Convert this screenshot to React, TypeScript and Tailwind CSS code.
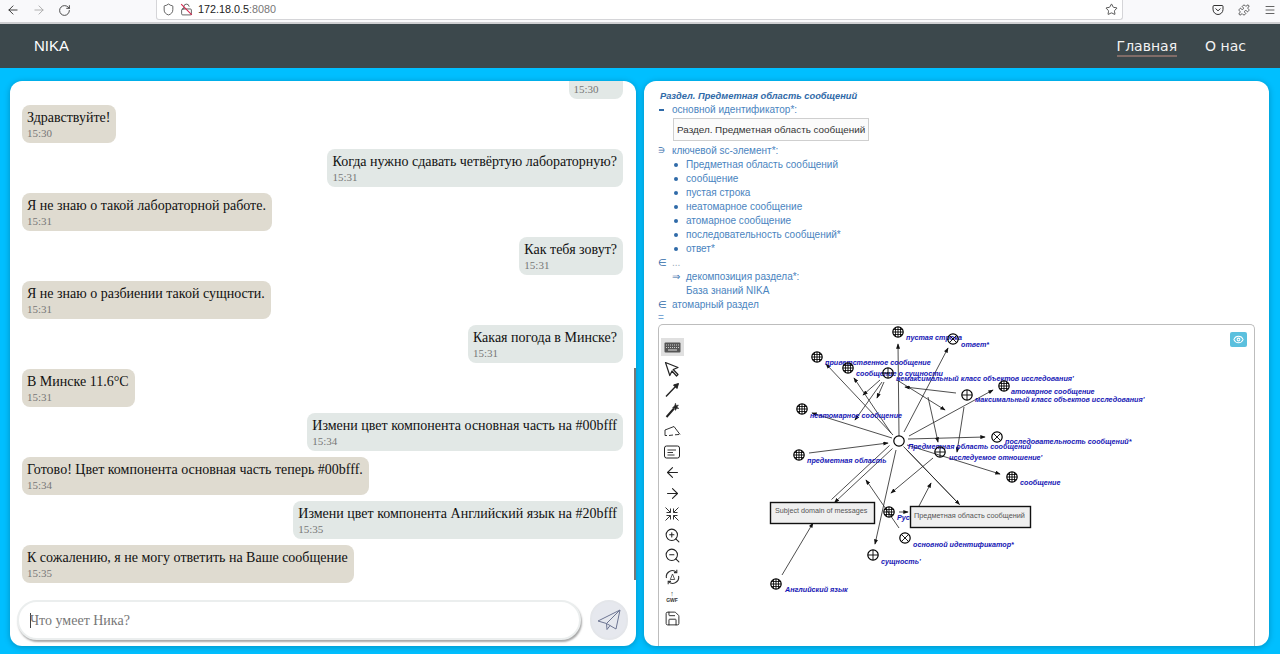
import {
  ArrowLeft,
  ArrowRight,
  Eye,
  Menu,
  Puzzle,
  RotateCw,
  Save,
  Shield,
  Star,
  ZoomIn,
  ZoomOut,
  LockOpen,
} from "lucide-react";

type Message = { text: string; time: string; mine?: boolean };

const messages: Message[] = [
  { text: "Привет", time: "15:30", mine: true },
  { text: "Здравствуйте!", time: "15:30" },
  { text: "Когда нужно сдавать четвёртую лабораторную?", time: "15:31", mine: true },
  { text: "Я не знаю о такой лабораторной работе.", time: "15:31" },
  { text: "Как тебя зовут?", time: "15:31", mine: true },
  { text: "Я не знаю о разбиении такой сущности.", time: "15:31" },
  { text: "Какая погода в Минске?", time: "15:31", mine: true },
  { text: "В Минске 11.6°C", time: "15:31" },
  { text: "Измени цвет компонента основная часть на #00bfff", time: "15:34", mine: true },
  { text: "Готово! Цвет компонента основная часть теперь #00bfff.", time: "15:34" },
  { text: "Измени цвет компонента Английский язык на #20bfff", time: "15:35", mine: true },
  { text: "К сожалению, я не могу ответить на Ваше сообщение", time: "15:35" },
];

const keyElements = [
  "Предметная область сообщений",
  "сообщение",
  "пустая строка",
  "неатомарное сообщение",
  "атомарное сообщение",
  "последовательность сообщений*",
  "ответ*",
];

type NodeKind = "globe" | "plus" | "cross" | "plain";

const nodes: { x: number; y: number; kind: NodeKind }[] = [
  { x: 898, y: 332, kind: "globe" },
  { x: 953, y: 339, kind: "cross" },
  { x: 817, y: 357, kind: "globe" },
  { x: 848, y: 368, kind: "globe" },
  { x: 888, y: 373, kind: "plus" },
  { x: 1004, y: 386, kind: "globe" },
  { x: 967, y: 395, kind: "plus" },
  { x: 802, y: 409, kind: "globe" },
  { x: 899, y: 441, kind: "plain" },
  { x: 997, y: 437, kind: "cross" },
  { x: 799, y: 455, kind: "globe" },
  { x: 940, y: 452, kind: "plus" },
  { x: 1012, y: 477, kind: "globe" },
  { x: 889, y: 512, kind: "globe" },
  { x: 905, y: 538, kind: "cross" },
  { x: 873, y: 555, kind: "plus" },
  { x: 776, y: 584, kind: "globe" },
];

const labels: { x: number; y: number; text: string }[] = [
  { x: 906, y: 340, text: "пустая строка" },
  { x: 961, y: 347, text: "ответ*" },
  { x: 825, y: 365, text: "приветственное сообщение" },
  { x: 856, y: 376, text: "сообщение о сущности" },
  { x: 896, y: 381, text: "немаксимальный класс объектов исследования'" },
  { x: 1011, y: 394, text: "атомарное сообщение" },
  { x: 975, y: 402, text: "максимальный класс объектов исследования'" },
  { x: 810, y: 418, text: "неатомарное сообщение" },
  { x: 1005, y: 444, text: "последовательность сообщений*" },
  { x: 908, y: 449, text: "Предметная область сообщений" },
  { x: 949, y: 460, text: "исследуемое отношение'" },
  { x: 807, y: 463, text: "предметная область" },
  { x: 1020, y: 485, text: "сообщение" },
  { x: 897, y: 520, text: "Русский язык" },
  { x: 913, y: 547, text: "основной идентификатор*" },
  { x: 881, y: 564, text: "сущность'" },
  { x: 785, y: 592, text: "Английский язык" },
];

const edges = [
  [899, 436, 898, 344],
  [904, 432, 948, 348],
  [893, 435, 826, 364],
  [891, 433, 854, 378],
  [909, 436, 993, 390],
  [892, 438, 812, 413],
  [809, 453, 888, 443],
  [908, 439, 985, 437],
  [907, 445, 1000, 474],
  [896, 450, 875, 544],
  [880, 380, 863, 395],
  [884, 382, 877, 398],
  [882, 382, 855, 420],
  [897, 380, 945, 410],
  [956, 393, 905, 387],
  [964, 407, 957, 452],
  [928, 397, 938, 442],
  [933, 458, 891, 493],
  [899, 528, 866, 480],
  [919, 506, 931, 483],
  [782, 575, 813, 523],
  [899, 512, 908, 512],
];

function GraphNode({ x, y, kind }: { x: number; y: number; kind: NodeKind }) {
  return (
    <g stroke="#000" fill="none">
      <circle cx={x} cy={y} r={5.2} strokeWidth={1.2} fill={kind === "plain" ? "#fff" : "none"} />
      {(kind === "globe" || kind === "plus") && (
        <path d={`M${x - 5} ${y}H${x + 5}M${x} ${y - 5}V${y + 5}`} strokeWidth={0.9} />
      )}
      {kind === "globe" && (
        <path
          d={`M${x - 4.5} ${y - 2.5}H${x + 4.5}M${x - 4.5} ${y + 2.5}H${x + 4.5}M${x - 2.5} ${y - 4.5}V${y + 4.5}M${x + 2.5} ${y - 4.5}V${y + 4.5}`}
          strokeWidth={0.8}
        />
      )}
      {kind === "cross" && (
        <path
          d={`M${x - 3.6} ${y - 3.6}L${x + 3.6} ${y + 3.6}M${x + 3.6} ${y - 3.6}L${x - 3.6} ${y + 3.6}`}
          strokeWidth={0.9}
        />
      )}
    </g>
  );
}

function DoubleEdge({ x1, y1, x2, y2 }: { x1: number; y1: number; x2: number; y2: number }) {
  return (
    <g stroke="#222" strokeWidth={0.8}>
      <line x1={x1 - 1.5} y1={y1 - 1.5} x2={x2 - 1.5} y2={y2 - 1.5} />
      <line x1={x1 + 1.5} y1={y1 + 1.5} x2={x2 + 1.5} y2={y2 + 1.5} markerEnd="url(#tip)" />
    </g>
  );
}

function Graph() {
  return (
    <svg className="h-full min-w-0 flex-1" fontFamily="'Liberation Sans', sans-serif">
      <defs>
        <marker id="tip" viewBox="0 0 8 6" refX="7" refY="3" markerWidth="7" markerHeight="5" orient="auto">
          <path d="M0 0L8 3L0 6z" fill="#111" />
        </marker>
      </defs>
      <g transform="translate(-689,-325)">
        {edges.map(([x1, y1, x2, y2], i) => (
          <line key={i} x1={x1} y1={y1} x2={x2} y2={y2} stroke="#222" strokeWidth={0.8} markerEnd="url(#tip)" />
        ))}
        <DoubleEdge x1={891} y1={447} x2={833} y2={501} />
        <DoubleEdge x1={905} y1={448} x2={958} y2={503} />
        {labels.map((l) => (
          <text key={l.text} x={l.x} y={l.y} fontSize={7.2} fontWeight={700} fontStyle="italic" fill="#1414b4">
            {l.text}
          </text>
        ))}
        {nodes.map((n, i) => (
          <GraphNode key={i} {...n} />
        ))}
        <rect x={770.5} y={502.5} width={104} height={21} fill="#efefef" stroke="#111" strokeWidth={1.4} />
        <text x={775} y={513} fontSize={7.2} fill="#555">
          Subject domain of messages
        </text>
        <rect x={910.5} y={506.5} width={120} height={21} fill="#efefef" stroke="#111" strokeWidth={1.4} />
        <text x={914} y={518} fontSize={7.3} fill="#555">
          Предметная область сообщений
        </text>
      </g>
    </svg>
  );
}

function Toolbar() {
  const cls = "h-[17px] w-[17px] text-[#222] my-[-0.5px]";
  return (
    <div className="flex w-[30px] shrink-0 flex-col items-center gap-[4.8px] pr-[4px] pt-[13px]">
      <div className="flex h-[18px] w-[23px] items-center justify-center bg-[#e0e0e0]">
        <svg width="17" height="11" viewBox="0 0 17 11">
          <rect x="0.5" y="0.5" width="16" height="10" rx="1" fill="#555" />
          <path d="M2 3H15M2 5.5H15" stroke="#ddd" strokeWidth="0.9" strokeDasharray="1 1" />
          <path d="M4 8H13" stroke="#ddd" strokeWidth="1" />
        </svg>
      </div>
      <svg width="16" height="16" viewBox="0 0 16 16" fill="none" stroke="#222" strokeWidth="1.2" strokeLinejoin="round">
        <path d="M1.5 1.5L14 6.5L9.2 8.5L14 13.5L12.5 15L8 10L5.8 14.5z" />
      </svg>
      <svg width="16" height="16" viewBox="0 0 16 16" fill="none" stroke="#222">
        <path d="M2 14.5L12.5 3.5" strokeWidth="1.4" />
        <path d="M9.5 3L14.5 1.5L13 6.5z" fill="#222" />
      </svg>
      <svg width="16" height="16" viewBox="0 0 16 16" fill="none" stroke="#222">
        <path d="M2.5 15L10 6.5" strokeWidth="2" />
        <path d="M11.5 1L12 3.5L14.5 3L13 5L15 6.5L12.5 6.5L11.5 8.5L10.5 6.2L8.5 5.5L10.5 4z" fill="#222" strokeWidth="0.4" />
      </svg>
      <svg width="17" height="16" viewBox="0 0 17 16" fill="none" stroke="#333" strokeWidth="1">
        <path d="M1 7L10 3.5L16 11.5" />
        <path d="M1 7V12.5H3M5 12.5L9 12M11 11.8L15 11.5" />
      </svg>
      <svg width="16" height="16" viewBox="0 0 16 16" fill="none" stroke="#222">
        <rect x="0.5" y="2" width="15" height="12" rx="2" />
        <path d="M3.5 6H12M3.5 8.5H9M3.5 11H10.5" strokeWidth="0.9" />
      </svg>
      <ArrowLeft className={cls} strokeWidth={1.5} />
      <ArrowRight className={cls} strokeWidth={1.5} />
      <svg width="16" height="16" viewBox="0 0 16 16" fill="none" stroke="#333" strokeWidth="1">
        <path d="M1.5 1.5L6.5 6.5M6.5 2.5V6.5H2.5" />
        <path d="M14.5 1.5L9.5 6.5M9.5 2.5V6.5H13.5" />
        <path d="M1.5 14.5L6.5 9.5M6.5 13.5V9.5H2.5" />
        <path d="M14.5 14.5L9.5 9.5M9.5 13.5V9.5H13.5" />
      </svg>
      <ZoomIn className={cls} strokeWidth={1.5} />
      <ZoomOut className={cls} strokeWidth={1.5} />
      <svg width="17" height="16" viewBox="0 0 17 16" fill="none" stroke="#333" strokeWidth="1.1">
        <path d="M2.5 9A6 6 0 0 1 12.5 3.3M14.5 7A6 6 0 0 1 4.5 12.7" />
        <path d="M12.8 0.8V3.6H10M4.2 15.2V12.4H7" />
        <path d="M8.5 5L6.3 10.5H10.7z" strokeWidth="0.8" />
      </svg>
      <div className="flex h-[16px] flex-col items-center font-['Liberation_Sans',sans-serif] text-[5px] font-bold leading-[5px] text-[#333]">
        <span className="text-[7px] font-normal leading-[8px]">↑</span>
        <span>GWF</span>
      </div>
      <Save className={cls} strokeWidth={1.3} />
    </div>
  );
}

function KnowledgePanel() {
  return (
    <div className="flex h-full w-[625px] flex-col overflow-hidden rounded-xl bg-white px-[14px] pt-[9px] font-['Liberation_Sans',sans-serif] text-[10px] leading-[14px] text-[#4a84c0] shadow-[0_1px_6px_rgba(0,0,0,0.25)]">
      <div className="pl-[2px] text-[9.3px] font-bold italic leading-[13px] text-[#2f6aa8]">
        Раздел. Предметная область сообщений
      </div>
      <div className="flex h-[13px] items-center gap-[8px] pl-[1px]">
        <span className="h-[2px] w-[5px] bg-[#2f6aa8]" />
        <span>основной идентификатор*:</span>
      </div>
      <div className="ml-[15px] mb-[3px] mt-[2px] w-fit border border-[#cfcfcf] bg-[#fbfbfb] px-[3px] py-[3.5px] text-[9.9px] text-[#333]">
        Раздел. Предметная область сообщений
      </div>
      <div className="flex h-[14px] items-center gap-[8px]">
        <span className="w-[6px] text-[8px] text-[#2f6aa8]">∋</span>
        <span>ключевой sc-элемент*:</span>
      </div>
      <ul className="pl-[16px]">
        {keyElements.map((k) => (
          <li key={k} className="flex h-[14px] items-center gap-[8px]">
            <span className="h-[4px] w-[4px] rounded-full bg-[#2f6aa8]" />
            {k}
          </li>
        ))}
      </ul>
      <div className="flex h-[14px] items-center gap-[9px]">
        <span className="w-[5px] text-[#2f6aa8]">∈</span>
        <span className="text-[#9ab]">...</span>
      </div>
      <div className="flex h-[14px] items-center gap-[6px] pl-[14px]">
        <span className="w-[8px] text-[#2f6aa8]">⇒</span>
        <span>декомпозиция раздела*:</span>
      </div>
      <div className="h-[14px] pl-[28px]">База знаний NIKA</div>
      <div className="flex h-[14px] items-center gap-[9px]">
        <span className="w-[5px] text-[#2f6aa8]">∈</span>
        <span>атомарный раздел</span>
      </div>
      <div className="h-[12px] leading-[12px] text-[#7aa6d4]">=</div>
      <div className="relative flex min-h-0 flex-1 rounded-t-[5px] border border-b-0 border-[#bdbdbd]">
        <Toolbar />
        <Graph />
        <button className="absolute right-[7px] top-[7px] flex h-[15px] w-[17px] items-center justify-center rounded-[2px] bg-[#5bc0de]">
          <Eye className="h-[11px] w-[11px] text-white" strokeWidth={2.2} />
        </button>
      </div>
    </div>
  );
}

function ChatPanel() {
  return (
    <div className="relative flex h-full w-[626px] flex-col overflow-hidden rounded-xl bg-white font-['Liberation_Serif',serif] shadow-[0_1px_6px_rgba(0,0,0,0.25)]">
      <div className="flex min-h-0 flex-1 flex-col justify-end gap-[6px] overflow-hidden pl-[12px] pr-[13px]">
        {messages.map((m) => (
          <div
            key={m.text}
            className={`flex h-[38px] w-fit shrink-0 flex-col rounded-lg pl-[5px] pr-[6px] pt-[5px] ${
              m.mine ? "self-end bg-[#e2e8e6]" : "bg-[#dfdbd0]"
            }`}
          >
            <span className="text-[14px] leading-[16px] text-[#111]">{m.text}</span>
            <span className="text-[11px] leading-[14px] text-[#777]">{m.time}</span>
          </div>
        ))}
      </div>
      <div className="absolute right-0 top-[287px] h-[212px] w-[2px] bg-[#777]" />
      <div className="flex h-[63px] shrink-0 items-start gap-[9px] pl-[7px] pt-[17px]">
        <div className="flex h-[40px] w-[564px] items-center rounded-[20px] border-2 border-[#ebeeee] bg-white pl-[11px] text-[14px] text-[#777] shadow-[1px_2px_2px_rgba(0,0,0,0.35)]">
          <span className="mr-[-1px] h-[15px] w-[1px] bg-[#444]" />
          Что умеет Ника?
        </div>
        <button className="flex h-[40px] w-[38px] items-center justify-center rounded-full border-2 border-[#e4e6ea] bg-[#e6e8ee]">
          <svg width="24" height="24" viewBox="0 0 24 24" fill="none" stroke="#6d7592" strokeWidth="1" strokeLinejoin="round">
            <path d="M23 2L1 13L9.5 15.5L23 2L19 21L9.5 15.5L10 21.5L13 17.6" />
          </svg>
        </button>
      </div>
    </div>
  );
}

function BrowserBar() {
  return (
    <div className="flex h-[24px] shrink-0 items-start border-b-2 border-[#cfcfd2] bg-[#f9f9fb] font-['Liberation_Sans',sans-serif]">
      <div className="flex h-[20px] w-[156px] items-center gap-[12px] pl-[6px] text-[#333]">
        <ArrowLeft className="h-[14px] w-[14px]" strokeWidth={1.6} />
        <ArrowRight className="h-[14px] w-[14px] text-[#aaa]" strokeWidth={1.6} />
        <RotateCw className="h-[13px] w-[13px]" strokeWidth={1.6} />
      </div>
      <div className="flex h-[20px] w-[967px] items-center gap-[5px] rounded-b-[3px] border border-t-0 border-[#d5d5d8] bg-white pl-[5px] pr-[4px] text-[10.8px]">
        <Shield className="h-[13px] w-[13px] text-[#444]" strokeWidth={1.5} />
        <span className="relative">
          <LockOpen className="h-[13px] w-[13px] text-[#444]" strokeWidth={1.5} />
          <span className="absolute left-[6px] top-[-1px] h-[15px] w-[1px] -rotate-45 bg-[#d6204a]" />
        </span>
        <span className="font-medium text-[#222]">
          172.18.0.5<span className="font-normal text-[#777]">:8080</span>
        </span>
        <Star className="ml-auto h-[13px] w-[13px] text-[#333]" strokeWidth={1.5} />
      </div>
      <div className="flex h-[20px] flex-1 items-center gap-[14px] pl-[89px] text-[#333]">
        <svg width="12" height="12" viewBox="0 0 12 12" fill="none" stroke="currentColor" strokeWidth="1" strokeLinecap="round" strokeLinejoin="round">
          <path d="M1 2.5Q1 1.5 2 1.5H10Q11 1.5 11 2.5V5.5A5 5 0 0 1 1 5.5z" />
          <path d="M3.8 4.8L6 6.8L8.2 4.8" />
        </svg>
        <Puzzle className="h-[12px] w-[12px]" strokeWidth={1.5} />
        <Menu className="h-[12px] w-[12px]" strokeWidth={1.5} />
      </div>
    </div>
  );
}

export default function App() {
  return (
    <div className="flex h-[654px] w-[1280px] flex-col overflow-hidden bg-[#00bfff]">
      <BrowserBar />
      <header className="flex h-[44px] shrink-0 items-center bg-[#3c484c] px-[34px] pt-[1px] text-white">
        <span className="font-['Liberation_Sans',sans-serif] text-[15px]">NIKA</span>
        <nav className="ml-auto flex gap-[28px] font-['DejaVu_Sans',sans-serif] text-[14px] text-[#f2f2f2]">
          <a className="border-b-2 border-[#806c68] leading-[18px]">Главная</a>
          <a className="leading-[18px]">О нас</a>
        </nav>
      </header>
      <main className="flex min-h-0 flex-1 gap-[8px] pb-[8px] pl-[10px] pt-[13px]">
        <ChatPanel />
        <KnowledgePanel />
      </main>
    </div>
  );
}
